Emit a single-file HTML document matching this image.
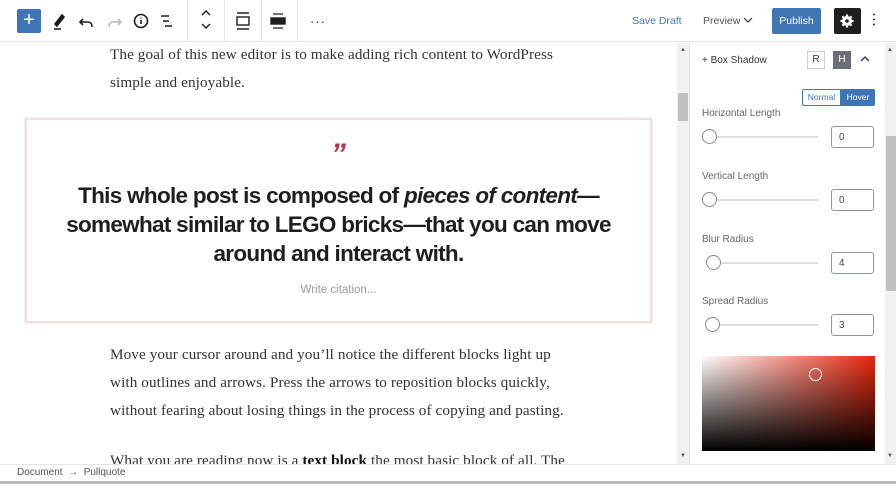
<!DOCTYPE html>
<html><head><meta charset="utf-8"><style>
*{box-sizing:border-box;margin:0;padding:0}
body{width:896px;height:484px;overflow:hidden;background:#fff;font-family:"Liberation Sans",sans-serif;position:relative;color:#1e1e1e}
.abs{position:absolute}
.tb{left:0;top:0;width:896px;height:42px;border-bottom:1px solid #e2e4e7;background:#fff}
.sep{position:absolute;top:0;width:1px;height:42px;background:#e8e8e8}
.serif{font-family:"Liberation Serif",serif;font-size:15.2px;color:#333;line-height:28px;letter-spacing:0.1px;position:absolute;left:110px}
.lbl{position:absolute;left:702px;font-size:10px;color:#666}
.track{position:absolute;left:710px;width:108px;height:2px;background:#ddd}
.knob{position:absolute;width:15px;height:15px;border:1px solid #888;border-radius:50%;background:#fff}
.inp{position:absolute;left:831px;width:43px;height:22px;border:1px solid #8d96a0;border-radius:3px;font-size:10px;color:#444;padding:5px 0 0 7px}
</style></head><body>
<div class="abs tb"></div>
<div class="abs" style="left:17px;top:9px;width:24px;height:24px;background:#3f74b5;border-radius:2px;color:#fff;font-size:20px;line-height:23px;text-align:center">+</div>
<svg class="abs" style="left:50px;top:10px" width="160" height="22" viewBox="0 0 160 22" fill="none" stroke="#1e1e1e" stroke-width="1.6">
<path d="M5 14 L12 5 L14 7 L7 16 Z" fill="#1e1e1e"/><path d="M4 19h7"/>
<path d="M33 9 l-3 3 3 3 M30 12 h8 a4 4 0 0 1 4 4v1"/>
<path d="M68 9 l3 3 -3 3 M71 12 h-8 a4 4 0 0 0 -4 4v1" stroke="#bbb"/>
<circle cx="91" cy="11" r="6.5"/><path d="M91 10v4 M91 7.5v1"/>
<path d="M111 6h8 M113 11h6 M115 16h7"/>
</svg>
<div class="sep" style="left:187px"></div><div class="sep" style="left:224px"></div><div class="sep" style="left:261px"></div><div class="sep" style="left:297px"></div>
<svg class="abs" style="left:195px;top:8px" width="100" height="26" fill="none" stroke="#1e1e1e" stroke-width="1.4">
<path d="M7 7l4-4 4 4 M7 16l4 4 4-4"/>
<path d="M42 5h12 M42 21h12"/><rect x="42" y="9" width="12" height="8"/>
<path d="M78 6h10 M78 20h10" stroke-width="1.2"/><rect x="76" y="10" width="14" height="6" fill="#1e1e1e"/>
</svg>
<div class="abs" style="left:310px;top:14px;font-size:13px;letter-spacing:1px">···</div>
<div class="abs" style="left:632px;top:15px;font-size:10.5px;color:#3f74b5">Save Draft</div>
<div class="abs" style="left:703px;top:15px;font-size:10.5px;color:#555">Preview</div>
<svg class="abs" style="left:743px;top:16px" width="10" height="8" fill="none" stroke="#333" stroke-width="1.2"><path d="M1 2l4 4 4-4"/></svg>
<div class="abs" style="left:772px;top:8px;width:49px;height:26px;background:#3f74b5;border-radius:2px;color:#fff;font-size:10.5px;line-height:26px;text-align:center">Publish</div>
<div class="abs" style="left:834px;top:8px;width:27px;height:26px;background:#1e1e1e;border-radius:2px"></div>
<svg class="abs" style="left:840px;top:14px" width="14" height="14" viewBox="0 0 14 14"><circle cx="7" cy="7" r="5" fill="#fff"/><path d="M7 0.5v13 M0.5 7h13 M2.4 2.4l9.2 9.2 M11.6 2.4l-9.2 9.2" stroke="#fff" stroke-width="2.2"/><circle cx="7" cy="7" r="1.8" fill="#1e1e1e"/></svg>
<div class="abs" style="left:873px;top:12px;width:2px;height:14px;background:radial-gradient(circle,#333 0.9px,transparent 1px) 0 0/2px 5px"></div>

<div class="serif" style="top:41px">The goal of this new editor is to make adding rich content to WordPress</div>
<div class="serif" style="top:69px">simple and enjoyable.</div>
<div class="abs" style="left:25px;top:118px;width:627px;height:205px;border:2px solid #f2dede;box-shadow:0 0 1px #e7b3b3"></div>
<div class="abs" style="left:25px;top:140px;width:627px;text-align:center;font-size:30px;font-weight:bold;font-style:italic;color:#b5304a;line-height:30px">”</div>
<div class="abs" style="left:25px;top:181px;width:627px;text-align:center;font-size:22.5px;font-weight:bold;line-height:29px;letter-spacing:-0.7px;color:#1e1e1e">This whole post is composed of <i>pieces of content</i>—<br>somewhat similar to LEGO bricks—that you can move<br>around and interact with.</div>
<div class="abs" style="left:25px;top:284px;width:627px;text-align:center;font-size:11.5px;color:#999">Write citation...</div>
<div class="serif" style="top:341px">Move your cursor around and you’ll notice the different blocks light up</div>
<div class="serif" style="top:369px">with outlines and arrows. Press the arrows to reposition blocks quickly,</div>
<div class="serif" style="top:397px">without fearing about losing things in the process of copying and pasting.</div>
<div class="serif" style="top:447px">What you are reading now is a <b style="color:#111">text block</b> the most basic block of all. The</div>

<div class="abs" style="left:677px;top:43px;width:12px;height:421px;background:#f1f1f1"></div>
<div class="abs" style="left:678px;top:93px;width:10px;height:28px;background:#c1c1c1"></div>
<div class="abs" style="left:680px;top:47px;font-size:6px;color:#555">▲</div>
<div class="abs" style="left:680px;top:453px;font-size:6px;color:#555">▼</div>
<div class="abs" style="left:689px;top:43px;width:1px;height:421px;background:#e2e4e7"></div>
<div class="abs" style="left:690px;top:43px;width:195px;height:421px;background:#fff"></div>
<div class="abs" style="left:885px;top:43px;width:11px;height:421px;background:#f1f1f1"></div>
<div class="abs" style="left:886px;top:136px;width:10px;height:155px;background:#c1c1c1"></div>
<div class="abs" style="left:887px;top:47px;font-size:6px;color:#555">▲</div>
<div class="abs" style="left:887px;top:453px;font-size:6px;color:#555">▼</div>

<div class="abs" style="left:702px;top:55px;font-size:10px;color:#333">+ Box Shadow</div>
<div class="abs" style="left:807px;top:51px;width:18px;height:18px;border:1px solid #ccc;font-size:10px;text-align:center;line-height:16px;color:#333">R</div>
<div class="abs" style="left:833px;top:51px;width:18px;height:18px;background:#6b6f75;font-size:10px;text-align:center;line-height:18px;color:#fff">H</div>
<svg class="abs" style="left:860px;top:55px" width="10" height="8" fill="none" stroke="#333" stroke-width="1.3"><path d="M1 6l4-4 4 4"/></svg>
<div class="abs" style="left:802px;top:89px;width:39px;height:17px;border:1px solid #3f74b5;font-size:8.5px;color:#3f74b5;text-align:center;line-height:15px;border-radius:2px 0 0 2px">Normal</div>
<div class="abs" style="left:841px;top:89px;width:34px;height:17px;background:#3f74b5;font-size:8.5px;color:#fff;text-align:center;line-height:17px;border-radius:0 2px 2px 0">Hover</div>

<div class="lbl" style="top:108px">Horizontal Length</div>
<div class="track" style="top:136px"></div><div class="knob" style="left:702px;top:129px"></div><div class="inp" style="top:126px">0</div>
<div class="lbl" style="top:171px">Vertical Length</div>
<div class="track" style="top:199px"></div><div class="knob" style="left:702px;top:192px"></div><div class="inp" style="top:189px">0</div>
<div class="lbl" style="top:234px">Blur Radius</div>
<div class="track" style="top:262px"></div><div class="knob" style="left:706px;top:255px"></div><div class="inp" style="top:252px">4</div>
<div class="lbl" style="top:296px">Spread Radius</div>
<div class="track" style="top:324px"></div><div class="knob" style="left:705px;top:317px"></div><div class="inp" style="top:314px">3</div>

<div class="abs" style="left:702px;top:356px;width:173px;height:95px;background:linear-gradient(to top,#000,rgba(0,0,0,0)),linear-gradient(to right,#fff,#e8250c)"></div>
<div class="abs" style="left:809px;top:368px;width:13px;height:13px;border:1.5px solid #fff;border-radius:50%"></div>

<div class="abs" style="left:0;top:464px;width:896px;height:17px;background:#fff;border-top:1px solid #e2e4e7"></div>
<div class="abs" style="left:17px;top:467px;font-size:10px;color:#555">Document &nbsp;→&nbsp; Pullquote</div>
<div class="abs" style="left:0;top:481px;width:896px;height:3px;background:#bbb"></div>
</body></html>
